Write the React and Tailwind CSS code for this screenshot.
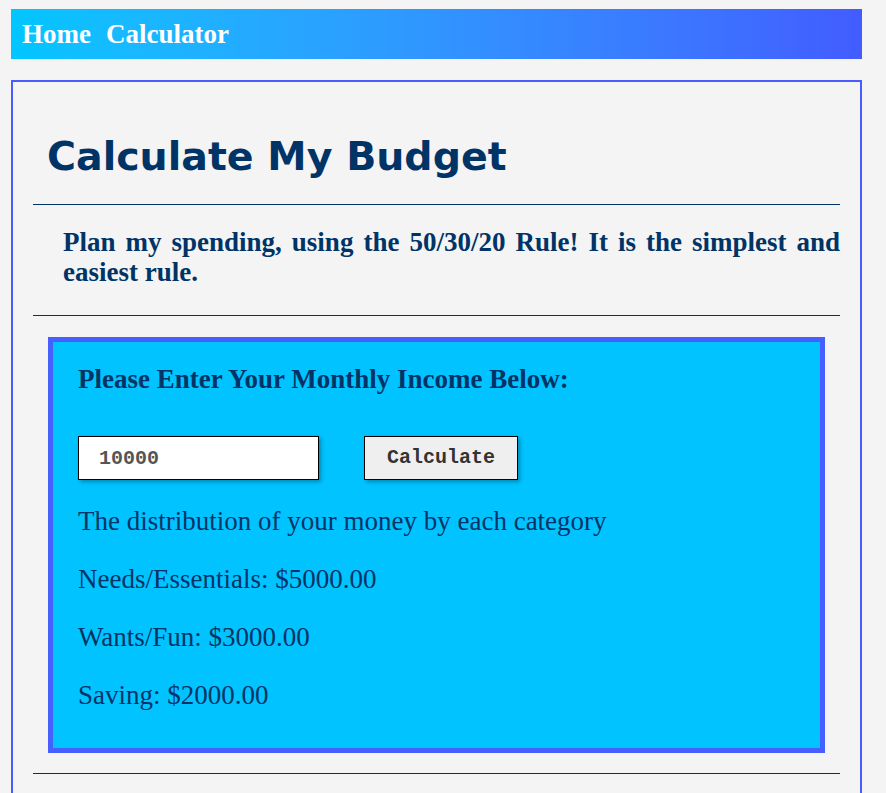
import { useState } from 'react'

const serif = { fontFamily: '"Liberation Serif", "Times New Roman", serif' }
const mono = { fontFamily: '"Liberation Mono", "Courier New", monospace' }

export default function App() {
  const [income, setIncome] = useState('10000')
  const [result, setResult] = useState(10000)

  const fmt = n => '$' + (result * n).toFixed(2)

  return (
    <div className="min-h-screen bg-[#f4f4f4] pt-[9px] pl-[11px]" style={serif}>
      <nav className="w-[851px] h-[50px] flex items-center pl-[11px] gap-[15px] bg-gradient-to-r from-[#00c6ff] to-[#425cff]">
        <a className="text-white font-bold text-[27px] leading-none cursor-pointer">Home</a>
        <a className="text-white font-bold text-[27px] leading-none cursor-pointer">Calculator</a>
      </nav>

      <main className="mt-[21px] w-[851px] min-h-[720px] border-2 border-[#4a5cff] px-5 text-[#003366]">
        <h1
          className="mt-[51px] pl-[14px] text-[39.5px] leading-[46px] font-bold"
          style={{ fontFamily: '"DejaVu Sans", Verdana, sans-serif' }}
        >
          Calculate My Budget
        </h1>
        <hr className="mt-[25px] border-t border-[#003366]" />
        <p className="mt-[22px] pl-[30px] text-[27px] leading-[30px] font-bold text-justify">
          Plan my spending, using the 50/30/20 Rule! It is the simplest and easiest rule.
        </p>
        <hr className="mt-[28px] border-t border-[#003366]" />

        <section className="mt-[21px] mx-[15px] border-[5px] border-[#4560ff] bg-[#00c3ff] pl-[25px] pt-[22px] pb-[37px]">
          <h3 className="text-[27px] leading-[31px] font-bold">Please Enter Your Monthly Income Below:</h3>
          <div className="mt-[41px] flex gap-[45px]">
            <input
              value={income}
              onChange={e => setIncome(e.target.value)}
              className="w-[241px] h-[44px] bg-white border border-black pl-5 text-[20px] font-bold text-[#555] shadow-[2px_2px_4px_rgba(0,0,0,0.3)] outline-none"
              style={mono}
            />
            <button
              onClick={() => setResult(parseFloat(income) || 0)}
              className="w-[154px] h-[44px] bg-[#efefef] border border-black text-[20px] font-bold text-[#333] shadow-[2px_2px_4px_rgba(0,0,0,0.3)]"
              style={mono}
            >
              Calculate
            </button>
          </div>
          <div className="mt-[26px] flex flex-col gap-[27px] text-[27px] leading-[31px]">
            <p>The distribution of your money by each category</p>
            <p>Needs/Essentials: {fmt(0.5)}</p>
            <p>Wants/Fun: {fmt(0.3)}</p>
            <p>Saving: {fmt(0.2)}</p>
          </div>
        </section>

        <hr className="mt-[20px] border-t border-[#003366]" />
      </main>
    </div>
  )
}
